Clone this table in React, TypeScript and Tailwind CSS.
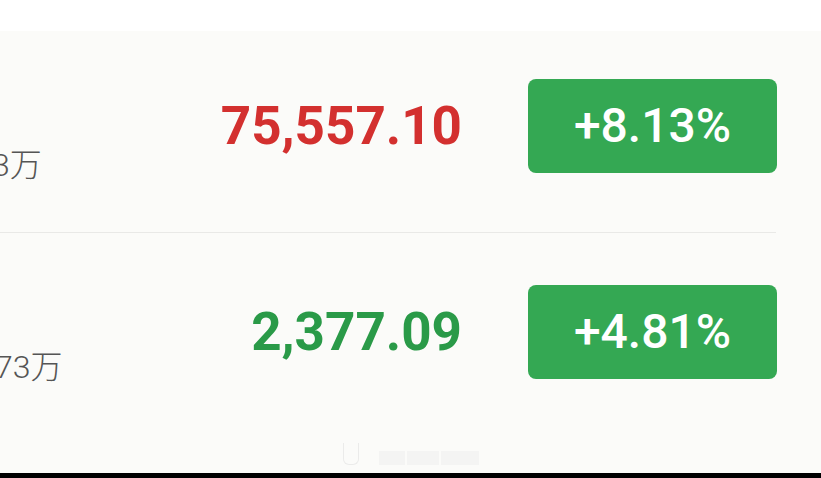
import React from "react";

const rows = [
  { vol: "3万", volShift: "-ml-[8px]", price: "75,557.10", priceColor: "text-[#d3302f]", change: "+8.13%" },
  { vol: "73万", volShift: "-ml-[5px]", price: "2,377.09", priceColor: "text-[#2a9a48]", change: "+4.81%" },
];

export default function App() {
  return (
    <div className="w-[821px] h-[478px] overflow-hidden bg-[#fbfbf9] flex flex-col" style={{ fontFamily: 'Roboto, "Noto Sans CJK SC", sans-serif' }}>
      <div className="h-[31px] bg-white shrink-0" />
      <div className="flex h-[201px] items-start pt-[48px] pr-[44px]">
        <div className="flex-1 self-stretch flex flex-col justify-end pb-[49px]">
          <span className={`text-[32px] leading-[36px] font-light text-[#555555] whitespace-nowrap ${rows[0].volShift}`}>{rows[0].vol}</span>
        </div>
        <div className="h-[94px] flex items-center">
          <span className={`text-[53px] font-bold leading-none ${rows[0].priceColor}`}>{rows[0].price}</span>
        </div>
        <div className="ml-[66px] w-[249px] h-[94px] rounded-[8px] bg-[#34a853] flex items-center justify-center">
          <span className="text-white text-[48px] font-medium leading-none">{rows[0].change}</span>
        </div>
      </div>
      <div className="h-px bg-[#e9e9e7] w-[776px] shrink-0" />
      <div className="flex h-[200px] items-start pt-[52px] pr-[44px]">
        <div className="flex-1 self-stretch flex flex-col justify-end pb-[48px]">
          <span className={`text-[32px] leading-[36px] font-light text-[#555555] whitespace-nowrap ${rows[1].volShift}`}>{rows[1].vol}</span>
        </div>
        <div className="h-[94px] flex items-center">
          <span className={`text-[53px] font-bold leading-none ${rows[1].priceColor}`}>{rows[1].price}</span>
        </div>
        <div className="ml-[66px] w-[249px] h-[94px] rounded-[8px] bg-[#34a853] flex items-center justify-center">
          <span className="text-white text-[48px] font-medium leading-none">{rows[1].change}</span>
        </div>
      </div>
      <div className="flex-1 flex items-end justify-start pl-[343px] pb-[8px]">
        <div className="flex items-end gap-[20px] opacity-50 blur-[0.6px]">
          <div className="w-[16px] h-[22px] border-x border-b border-[#dcdcdc] rounded-b-[6px]" />
          <div className="flex gap-[2px]">
            <div className="w-[26px] h-[14px] bg-[#eeeeee]" />
            <div className="w-[32px] h-[14px] bg-[#eeeeee]" />
            <div className="w-[38px] h-[14px] bg-[#eeeeee]" />
          </div>
        </div>
      </div>
      <div className="h-[5px] bg-black shrink-0" />
    </div>
  );
}
